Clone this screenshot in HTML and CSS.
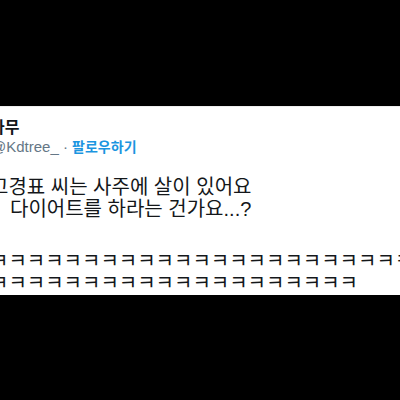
FILE: index.html
```html
<!DOCTYPE html>
<html lang="ko">
<head>
    <meta charset="UTF-8">
    <title>나무 트윗</title>
    <link rel="stylesheet" href="styles.css">
</head>
<body>
    <div class="frame">
        <div class="tweet">
            <!-- Header -->
            <div class="name">나무</div>
            <div class="handle">@Kdtree_ <span class="dot">·</span> <a class="follow" href="#">팔로우하기</a></div>

            <!-- Tweet body -->
            <div class="text">
                <div>고경표 씨는 사주에 살이 있어요</div>
                <div>　다이어트를 하라는 건가요...?</div>
                <div class="blank"></div>
                <div>ㅋㅋㅋㅋㅋㅋㅋㅋㅋㅋㅋㅋㅋㅋㅋㅋㅋㅋㅋㅋㅋㅋㅋㅋㅋ</div>
                <div>ㅋㅋㅋㅋㅋㅋㅋㅋㅋㅋㅋㅋㅋㅋㅋㅋㅋㅋㅋㅋ</div>
            </div>
        </div>
    </div>
</body>
</html>
```

FILE: styles.css
```css
html, body {
    margin: 0;
    height: 100%;
    background-color: #000;
    overflow: hidden;
}
.frame {
    margin-top: 106px;
    height: 189px;
    background-color: #fff;
    border-top: 1px solid #eee;
    box-sizing: border-box;
    overflow: hidden;
}
.tweet {
    margin-left: -10px;
    padding-top: 9px;
    color: #14171a;
    font-family: "Liberation Sans", "Noto Sans CJK KR", sans-serif;
    white-space: nowrap;
}
.name {
    font-family: "Noto Sans CJK KR", sans-serif;
    font-size: 16px;
    font-weight: bold;
    line-height: 20px;
}
.handle {
    margin-left: 1px;
    font-size: 15px;
    line-height: 20px;
    color: #657786;
}
.follow {
    font-family: "Noto Sans CJK KR", sans-serif;
    font-size: 14px;
    font-weight: bold;
    color: #1b95e0;
    text-decoration: none;
}
.text {
    margin-top: 19px;
    font-size: 20px;
    line-height: 22px;
}
.blank {
    height: 30px;
}
```
